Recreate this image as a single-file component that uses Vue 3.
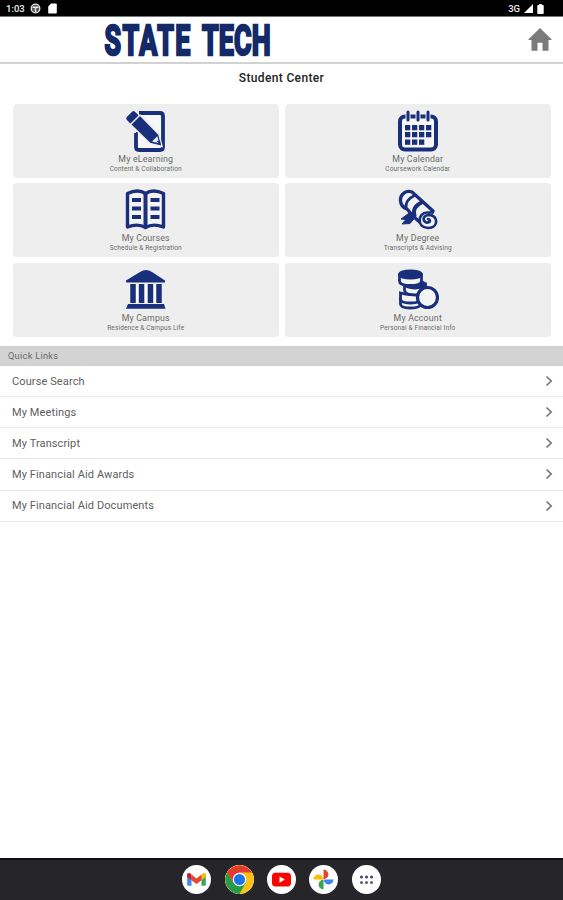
<script setup>
const cards = [
  { icon: 'edit', title: 'My eLearning', sub: 'Content & Collaboration' },
  { icon: 'calendar', title: 'My Calendar', sub: 'Coursework Calendar' },
  { icon: 'book', title: 'My Courses', sub: 'Schedule & Registration' },
  { icon: 'degree', title: 'My Degree', sub: 'Transcripts & Advising' },
  { icon: 'campus', title: 'My Campus', sub: 'Residence & Campus Life' },
  { icon: 'coins', title: 'My Account', sub: 'Personal & Financial Info' },
]
const links = ['Course Search', 'My Meetings', 'My Transcript', 'My Financial Aid Awards', 'My Financial Aid Documents']
const calendarCells = [
  [8, 15], [15, 15], [22, 15], [29, 15],
  [8, 22], [15, 22], [22, 22], [29, 22],
  [8, 29.5], [15, 29.5], [22, 29.5],
]
const apps = ['gmail', 'chrome', 'youtube', 'photos', 'drawer']
</script>

<template>
  <div class="screen">
    <div class="status">
      <span class="time">1:03</span>
      <svg class="st-face" width="11" height="11" viewBox="0 0 11 11">
        <circle cx="5.5" cy="5.5" r="4.3" fill="#555" stroke="#e8e8e8" stroke-width="1.3" />
        <path d="M2.500 4.300h6" stroke="#eee" stroke-width="1.500" />
        <path d="M5.500 5v4" stroke="#ddd" stroke-width="1.500" />
      </svg>
      <svg class="st-card" width="9" height="11" viewBox="0 0 9 11">
        <path d="M3 .5h5q.8 0 .8.8v8.400q0 .8-.8.8H1q-.8 0-.8-.8V3.600z" fill="#fff" />
      </svg>
      <span class="net">3G</span>
      <svg class="st-signal" width="9" height="9" viewBox="0 0 9 9"><path d="M9 0v9H0z" fill="#fff" /></svg>
      <svg class="st-batt" width="7" height="10" viewBox="0 0 7 10"><path d="M2.200 0h2.600v1h1.200q.7 0 .7.7v7.600q0 .7-.7.7H1q-.7 0-.7-.7V1.700Q.3 1 1 1h1.200z" fill="#fff" /></svg>
    </div>

    <header class="header">
      <svg class="logo" width="170" height="45" viewBox="0 0 170 45">
        <text transform="translate(2.500 37.500) scale(.638 1)"><tspan class="wide">STATE </tspan><tspan>TECH</tspan></text>
      </svg>
      <svg class="home" width="24" height="24" viewBox="0 0 24 24">
        <path d="M12 0 .500 11.200q-.5.800.4.800H3.500V22.800h6V14.800h5v8h6V12h2.600q.9 0 .4-.8z" fill="#7b7b7b" />
      </svg>
    </header>

    <h1 class="title">Student Center</h1>

    <main class="grid">
      <section v-for="card in cards" :key="card.icon" class="card">
        <svg class="icon" width="42" height="42" viewBox="0 0 42 42">
          <g v-if="card.icon === 'edit'">
            <path d="M14 3h21q3 0 3 3v31q0 3-3 3H14q-3 0-3-3V22" fill="#f6f6f6" stroke="#1a2f7c" stroke-width="3.800" />
            <path d="M0 3h13l-2 20H6z" fill="#eee" />
            <path d="M3.200 8.500 8.500 3.200 11.500 6 6 11.500z" fill="#1a2f7c" stroke="#1a2f7c" stroke-width="4" stroke-linejoin="round" />
            <path d="m5.500 14.500 9.500-9.500L34 24.500l3 12L25 33.500z" fill="#1a2f7c" stroke="#eee" stroke-width="1.500" />
            <path d="m27 31.500 5.300-5.300 2 7z" fill="#eee" />
            <path d="m31.500 31 4.500 4.500-1-5z" fill="#1a2f7c" />
          </g>
          <g v-else-if="card.icon === 'calendar'">
            <rect x="3" y="6.500" width="36" height="33" rx="5" fill="#f7f7f7" stroke="#1a2f7c" stroke-width="4" />
            <path d="M11 1.500v9M21 1.500v9M31 1.500v9" stroke="#eee" stroke-width="5" />
            <path d="M11 2v8M21 2v8M31 2v8" stroke="#1a2f7c" stroke-width="3" stroke-linecap="round" />
            <rect v-for="(cell, i) in calendarCells" :key="i" :x="cell[0]" :y="cell[1]" width="5.300" height="5.300" fill="#1a2f7c" />
          </g>
          <g v-else-if="card.icon === 'book'">
            <path d="M2.500 4.500Q13-.5 20.500 4.500 28-.5 38.500 4.500V38Q28 34 20.500 38.500 13 34 2.500 38z" fill="#f4f4f4" stroke="#1a2f7c" stroke-width="3.400" stroke-linejoin="round" />
            <path d="M20.500 4v35" stroke="#1a2f7c" stroke-width="4" />
            <path d="M7 11h9M7 19.500h9M7 28h9M25.500 11h9M25.500 19.500h9M25.500 28h9" fill="none" stroke="#1a2f7c" stroke-width="3.800" />
          </g>
          <g v-else-if="card.icon === 'degree'" stroke-linejoin="round" stroke-linecap="round">
            <path d="M15 22 4 30l5 .5L5 35l8-.5 6-7z" fill="#1a2f7c" stroke="#1a2f7c" />
            <path d="M3.500 12C3 5 9 1 15 3L36 22 26 36 17 28 10 20Q4 18 3.500 12z" fill="#f4f4f4" stroke="#1a2f7c" stroke-width="3.300" />
            <path d="M9 19Q8 11 17.500 6.500" fill="none" stroke="#1a2f7c" stroke-width="2.800" />
            <path d="M17.500 26.500Q15 18 24.500 13.500" fill="none" stroke="#1a2f7c" stroke-width="4" />
            <path d="M35.500 23.500H30c-9 0-11 15 1 15.500 11 0 10.500-13 1-13-8 .5-6 8-1 7.500 3-1 2-3.500 0-3.500" fill="#f4f4f4" stroke="#1a2f7c" stroke-width="2.700" />
          </g>
          <g v-else-if="card.icon === 'campus'">
            <path d="M1 11.500 15 3q6-4 12 0l13 8.500v2H1z" fill="#1a2f7c" />
            <path d="M8 15v19M16.500 15v19M25.500 15v19M34 15v19" stroke="#1a2f7c" stroke-width="5.500" />
            <path d="M12.300 15v19M21 15v19M29.800 15v19" stroke="#fff" stroke-width="2" />
            <path d="M3 35h36l1.500 4.800H1z" fill="#1a2f7c" />
          </g>
          <g v-else fill="#f4f4f4" stroke="#1a2f7c" stroke-width="2.800">
            <path d="M3.500 30v5q0 4 10 4t10-4v-5z" />
            <path d="M3.500 24v6q0 4 10 4t10-4v-6q-10 3-20 0z" />
            <path d="M7.500 15v6q0 5 11 5t10-5v-6z" />
            <ellipse cx="18" cy="15.500" rx="10" ry="3.500" fill="#1a2f7c" />
            <path d="M2.500 6v6q0 4.500 11 4.500t11-4.500V6z" />
            <ellipse cx="13.500" cy="5.500" rx="11" ry="3.700" fill="#1a2f7c" />
            <circle cx="30.500" cy="28.500" r="10" stroke-width="3.200" />
          </g>
        </svg>
        <div class="card-title">{{ card.title }}</div>
        <div class="card-sub">{{ card.sub }}</div>
      </section>
    </main>

    <div class="section">Quick Links</div>
    <nav class="links">
      <div v-for="link in links" :key="link" class="link">
        <span>{{ link }}</span>
        <svg width="8" height="12" viewBox="0 0 8 12"><path d="m1.500 1.500 4.700 4.500-4.700 4.500" fill="none" stroke="#777" stroke-width="1.700" /></svg>
      </div>
    </nav>

    <footer class="dock">
      <div v-for="app in apps" :key="app" class="app">
        <svg width="29" height="29" viewBox="0 0 29 29">
          <g v-if="app === 'gmail'">
            <path d="M5.200 8.500v11.300q0 1 1 1h3.300V12z" fill="#4285f4" />
            <path d="M23.800 8.500v11.300q0 1-1 1h-3.300V12z" fill="#34a853" />
            <path d="M19.500 9.500 21 8.200q2.800-1 2.800 1.800v2l-4.300 3.200z" fill="#fbbc04" />
            <path d="M9.500 9.500 8 8.200Q5.200 7.200 5.200 10v2l4.300 3.200z" fill="#c5221f" />
            <path d="m9.500 9.500 5 4 5-4v5.700l-5 3.800-5-3.800z" fill="#ea4335" />
          </g>
          <g v-else-if="app === 'chrome'">
            <circle cx="14.500" cy="14.500" r="14.500" fill="#fbc116" />
            <path d="M2 7.500A14.500 14.500 0 0 1 27 7.500H14.500L8.500 18z" fill="#e33b2e" />
            <path d="M2 7.500A14.500 14.500 0 0 0 14.500 29L20.600 18H8.500z" fill="#289b49" />
            <circle cx="14.500" cy="14.500" r="6.800" fill="#fff" />
            <circle cx="14.500" cy="14.500" r="5.500" fill="#1a73e8" />
          </g>
          <g v-else-if="app === 'youtube'">
            <rect x="5" y="7.700" width="19" height="13.800" rx="3.500" fill="#f00" />
            <path d="m12.500 11.500 5.400 3.100-5.400 3.100z" fill="#fff" />
          </g>
          <g v-else-if="app === 'photos'">
            <path d="M14.500 4.500a4.900 4.900 0 0 1 0 9.800z" fill="#ea4335" />
            <path d="M24.500 14.500a4.900 4.900 0 0 1-9.800 0z" fill="#4285f4" />
            <path d="M14.500 24.500a4.900 4.900 0 0 1 0-9.800z" fill="#34a853" />
            <path d="M4.500 14.500a4.900 4.900 0 0 1 9.800 0z" fill="#fbbc04" />
          </g>
          <g v-else>
            <g fill="#3d3b78">
              <circle cx="9.500" cy="12" r="1.500" /><circle cx="14.500" cy="12" r="1.500" /><circle cx="19.500" cy="12" r="1.500" />
            </g>
            <g fill="#625d78">
              <circle cx="9.500" cy="17.500" r="1.500" /><circle cx="14.500" cy="17.500" r="1.500" /><circle cx="19.500" cy="17.500" r="1.500" />
            </g>
          </g>
        </svg>
      </div>
    </footer>
  </div>
</template>

<style>
body { margin: 0; background: #fff; }
</style>

<style scoped>
.screen {
  width: 563px;
  height: 900px;
  display: flex;
  flex-direction: column;
  background: #fff;
  font-family: Roboto, "Liberation Sans", sans-serif;
  overflow: hidden;
}
svg { display: block; flex: none; }
.status {
  height: 15px;
  flex: none;
  background: #000;
  border-bottom: 1px solid #777;
  display: flex;
  align-items: center;
  padding: 1px 19px 0 6px;
  color: #eee;
  font-size: 9.500px;
  font-weight: 500;
}
.time { width: 20px; }
.st-face { margin-left: 4px; }
.st-card { margin-left: 7px; }
.net { margin-left: auto; }
.st-signal { margin-left: 4px; }
.st-batt { margin-left: 4px; }
.header {
  height: 45px;
  flex: none;
  border-bottom: 2px solid #d2d2d2;
  display: flex;
  align-items: center;
  justify-content: space-between;
  padding: 0 11px 0 102px;
}
.logo { overflow: visible; }
.logo text {
  font-family: Roboto, "Liberation Sans", sans-serif;
  font-weight: 700;
  font-size: 42px;
  letter-spacing: 0.300px;
  word-spacing: 3px;
  fill: #132968;
  stroke: #132968;
  stroke-width: 2.600px;
}
.logo .wide { letter-spacing: 2.400px; }
.title {
  margin: 0;
  height: 40px;
  flex: none;
  line-height: 29px;
  text-align: center;
  font-size: 12px;
  font-weight: 500;
  letter-spacing: 0.350px;
  color: #222;
}
.grid {
  flex: none;
  display: grid;
  grid-template-columns: 1fr 1fr;
  grid-auto-rows: 74px;
  gap: 5.300px 5.500px;
  padding: 0 12px 0 12.500px;
}
.card {
  background: #eee;
  border-radius: 4px;
  display: flex;
  flex-direction: column;
  align-items: center;
  padding-top: 6px;
  box-sizing: border-box;
  color: #6a6a6a;
  white-space: nowrap;
}
.card-title { font-size: 8.800px; line-height: 12px; margin-top: 1px; letter-spacing: 0.180px; }
.card-sub { font-size: 6.500px; line-height: 9px; letter-spacing: 0.150px; }
.section {
  flex: none;
  margin-top: 9.400px;
  height: 20px;
  line-height: 20px;
  padding-left: 8px;
  background: #d3d3d3;
  color: #6a6a6a;
  font-size: 9.200px;
  letter-spacing: 0.300px;
}
.link {
  height: 31.150px;
  box-sizing: border-box;
  border-bottom: 1.500px solid #ebebeb;
  display: flex;
  align-items: center;
  justify-content: space-between;
  padding: 0 10px 0 12px;
  font-size: 11px;
  letter-spacing: 0.110px;
  color: #606060;
}
.dock {
  margin-top: auto;
  height: 42px;
  flex: none;
  box-sizing: border-box;
  border-top: 2px solid #111116;
  background: #25252a;
  display: flex;
  justify-content: center;
  align-items: center;
  gap: 13.300px;
  padding-bottom: 2px;
}
.app { width: 29px; height: 29px; border-radius: 50%; background: #fff; overflow: hidden; }
</style>
